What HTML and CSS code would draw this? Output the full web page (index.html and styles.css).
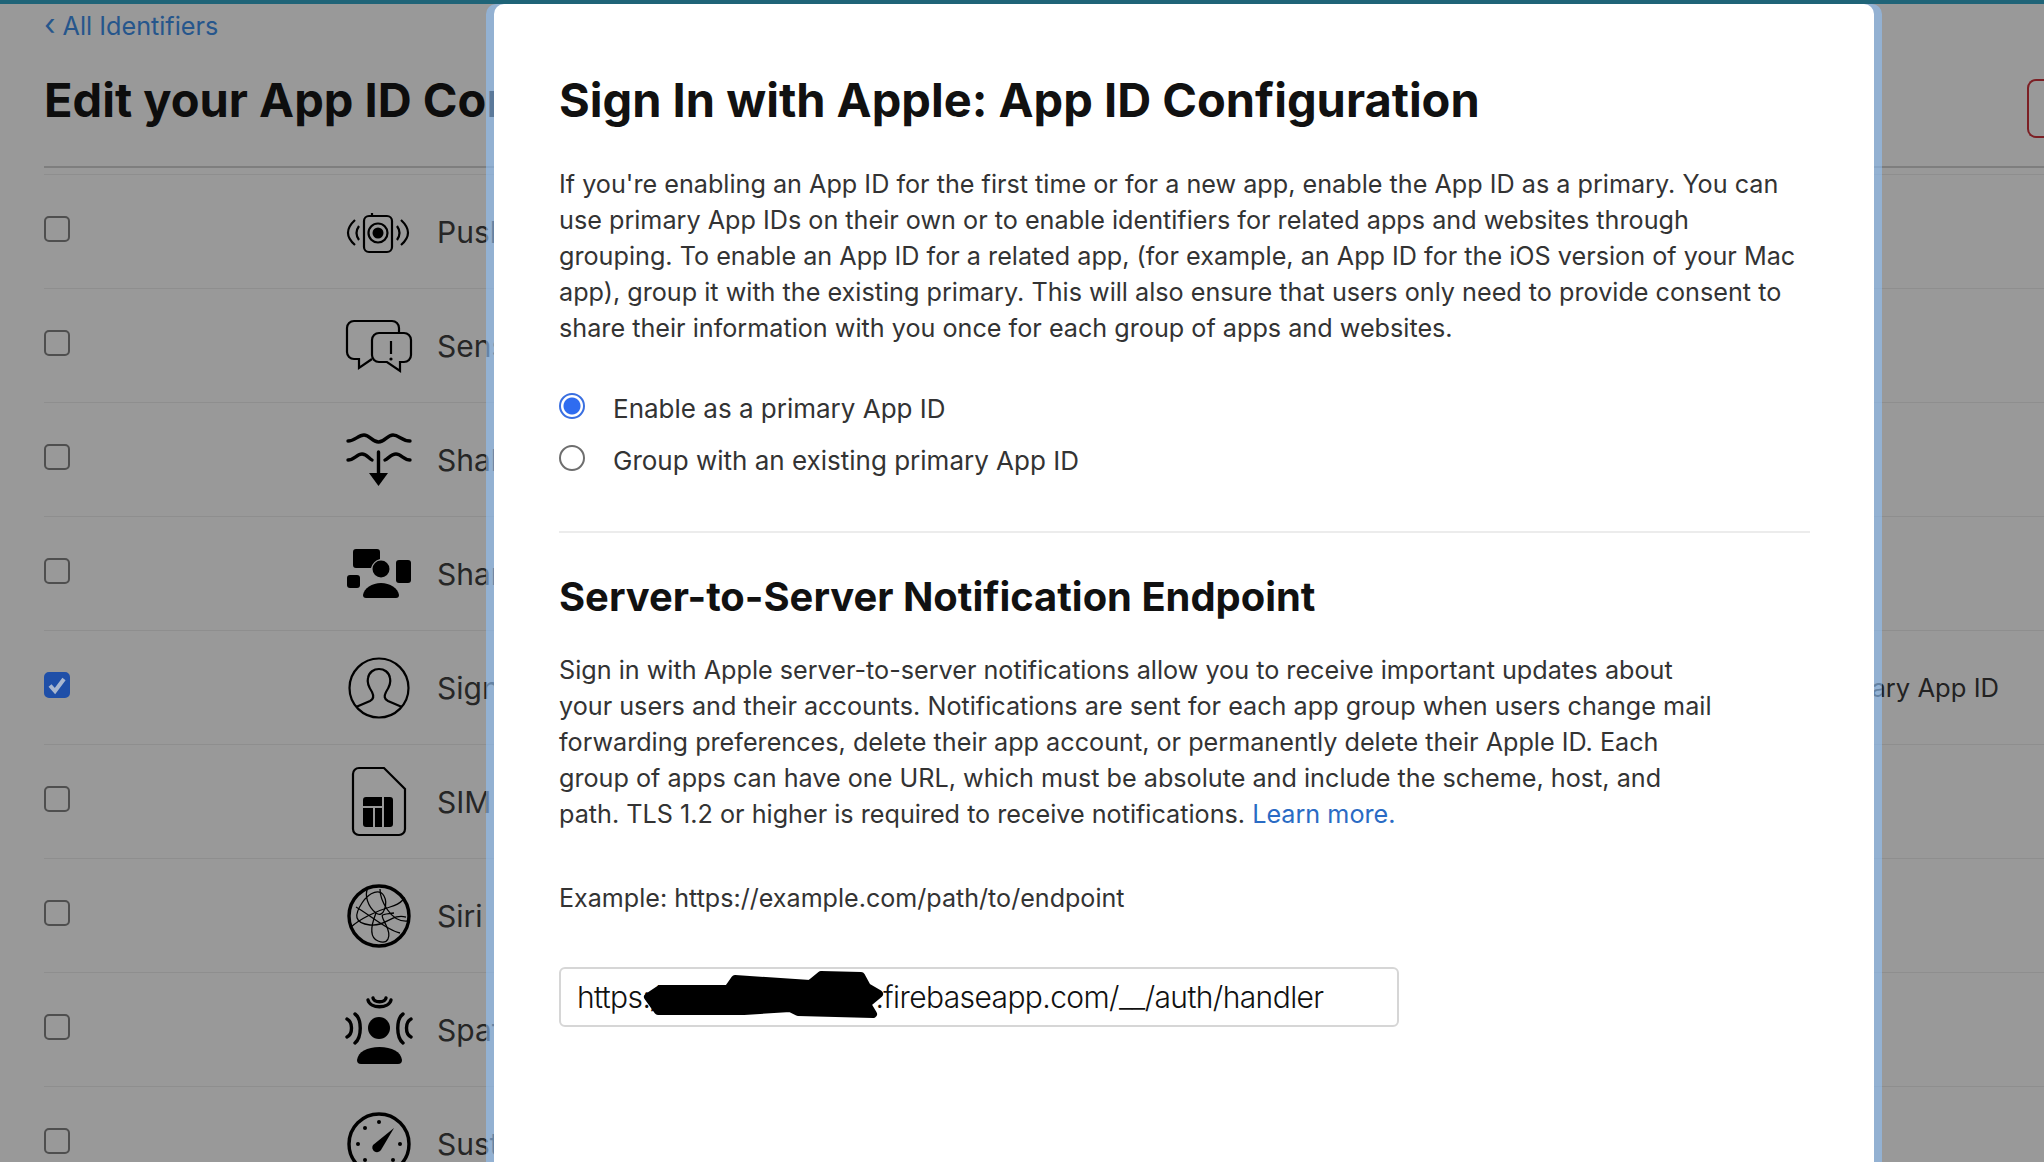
FILE: index.html
```html
<!DOCTYPE html>
<html lang="en">
<head>
<meta charset="utf-8">
<title>Edit your App ID Configuration</title>
<link rel="stylesheet" href="styles.css">
</head>
<body>
<div class="topbar"></div>
<main class="page">
  <a class="back"><span class="chev">‹</span> All Identifiers</a>
  <header class="head">
    <h1 class="page-title">Edit your App ID Configuration</h1>
    <span class="save"></span>
  </header>
  <div class="rule"></div>
  <div class="rows">
    <div class="row">
      <span class="check"></span>
      <svg class="ico" viewBox="0 0 66 66"><g class="ln2"><rect x="18" y="17" width="28" height="36" rx="5"/><path d="M26 17v-3"/><circle cx="32" cy="34" r="9.500"/><path d="M9 21Q-5 34 9 46M13 27Q8 34 13 41M55 21Q69 34 55 46M51 27Q56 34 51 41"/></g><circle cx="32" cy="34" r="5.500"/></svg>
      <span class="name">Push Notifications</span>
    </div>
    <div class="row">
      <span class="check"></span>
      <svg class="ico" viewBox="0 0 66 66"><g class="ln2"><path d="M53 20V15a7 7 0 0 0-7-7H8a7 7 0 0 0-7 7V39a7 7 0 0 0 7 7H13V55L26 46"/><path d="M33 20H58a7 7 0 0 1 7 7V42a7 7 0 0 1-7 7H54V58L41 49H33a7 7 0 0 1-7-7V27a7 7 0 0 1 7-7Z"/><path d="M45 28V41"/></g><circle cx="45" cy="46" r="1.600"/></svg>
      <span class="name">Sensitive Content Analysis</span>
    </div>
    <div class="row">
      <span class="check"></span>
      <svg class="ico" viewBox="0 0 66 66"><g class="ln3"><path d="M2 14C9 14 12 8 18 8S26 15 32.500 15 41 8 47 8 56 14 64 14"/><path d="M2 33C8 33 11 27 16 27S23 32 26 33M39 33C42 32 45 27 50 27S58 33 64 33"/><path d="M32.500 25V47"/></g><path d="M23 46H42L32.500 59Z"/></svg>
      <span class="name">Shallow Depth and Pressure</span>
    </div>
    <div class="row">
      <span class="check"></span>
      <svg class="ico" viewBox="0 0 66 66"><path d="M10 8H31a3 3 0 0 1 3 3V18A13 13 0 0 0 25 27H10a3 3 0 0 1-3-3V11a3 3 0 0 1 3-3Z"/><rect x="50" y="19" width="15" height="23" rx="3"/><rect x="1" y="34" width="13" height="13" rx="3"/><circle cx="35" cy="28" r="8.500"/><path d="M17 54C18 47 26 42 35 42S52 47 53 54Q53 57 50 57H20Q17 57 17 54Z"/></svg>
      <span class="name">Shared with You</span>
    </div>
    <div class="row">
      <span class="check is-on"><svg viewBox="0 0 26 26"><path class="tick" d="M6 13.500 11 19 20 7"/></svg></span>
      <svg class="ico" viewBox="0 0 66 66"><g class="ln2"><circle cx="33" cy="33" r="29.500"/><path d="M10 52L24 46C28 44 28 41 26 37C22 31 21 27 22 23C23 17 28 14 33 14C38 14 43 17 44 23C45 27 44 31 40 37C38 41 38 44 42 46L56 52"/></g></svg>
      <span class="name">Sign In with Apple</span>
      <span class="config">Enable as a primary App ID</span>
    </div>
    <div class="row">
      <span class="check"></span>
      <svg class="ico" viewBox="0 0 66 66"><path class="ln2" d="M13-1H38L59 20V60a6 6 0 0 1-6 6H13a6 6 0 0 1-6-6V5a6 6 0 0 1 6-6Z"/><path d="M20 28H36V37H17V31a3 3 0 0 1 3-3ZM38 28H44a3 3 0 0 1 3 3V55a3 3 0 0 1-3 3H38ZM17 39H27V58H20a3 3 0 0 1-3-3ZM29 39H36V58H29Z"/></svg>
      <span class="name">SIM Access</span>
    </div>
    <div class="row">
      <span class="check"></span>
      <svg class="ico" viewBox="0 0 66 66"><circle class="ln3" cx="33" cy="33" r="30"/><g class="ln1"><path d="M22 5C18 12 22 24 30 30S42 20 38 13 24 8 16 20 8 40 24 42 46 30 60 34"/><path d="M5 44C14 36 30 28 44 24S58 14 58 14"/><path d="M30 30C26 40 22 54 32 58S46 54 40 42 34 32 48 30"/><path d="M10 24C24 32 42 48 54 50"/><path d="M34 6C34 16 44 40 62 38"/></g></svg>
      <span class="name">Siri</span>
    </div>
    <div class="row">
      <span class="check"></span>
      <svg class="ico" viewBox="0 0 66 66"><circle cx="33" cy="31" r="11"/><path d="M11 63C12 55 21 50 33.500 50S55 55 56 63Q56 67 52 67H15Q11 67 11 63Z"/><g class="ln3"><path d="M22 3C24 12 43 12 45 3M27 1C28 6 39 6 40 1"/><path d="M9 17C16 22 16 40 9 46M1 22C7 25 7 37 1 40"/><path d="M57 17C50 22 50 40 57 46M65 22C59 25 59 37 65 40"/></g></svg>
      <span class="name">Spatial Audio Profile</span>
    </div>
    <div class="row">
      <span class="check"></span>
      <svg class="ico" viewBox="0 0 66 66"><circle class="ln3" cx="33" cy="33" r="30"/><path d="M48 17 35 39a4.500 4.500 0 0 1-8-5Z"/><circle cx="33" cy="11" r="2"/><circle cx="19" cy="17" r="2"/><circle cx="12" cy="33" r="2"/><circle cx="54" cy="33" r="2"/><circle cx="47" cy="49" r="2"/><circle cx="19" cy="49" r="2"/></svg>
      <span class="name">Sustained Execution</span>
    </div>
  </div>
</main>

<div class="scrim">
  <section class="modal">
    <h2 class="modal-title">Sign In with Apple: App ID Configuration</h2>
    <p class="copy intro">If you're enabling an App ID for the first time or for a new app, enable the App ID as a primary. You can use primary App IDs on their own or to enable identifiers for related apps and websites through grouping. To enable an App ID for a related app, (for example, an App ID for the iOS version of your Mac app), group it with the existing primary. This will also ensure that users only need to provide consent to share their information with you once for each group of apps and websites.</p>
    <div class="choices">
      <div class="choice"><span class="radio is-on"></span><span>Enable as a primary App ID</span></div>
      <div class="choice"><span class="radio"></span><span>Group with an existing primary App ID</span></div>
    </div>
    <div class="divider"></div>
    <h3 class="section-title">Server-to-Server Notification Endpoint</h3>
    <p class="copy notes">Sign in with Apple server-to-server notifications allow you to receive important updates about your users and their accounts. Notifications are sent for each app group when users change mail forwarding preferences, delete their app account, or permanently delete their Apple ID. Each group of apps can have one URL, which must be absolute and include the scheme, host, and path. TLS 1.2 or higher is required to receive notifications. <a class="link">Learn more.</a></p>
    <p class="example">Example: https://example.com/path/to/endpoint</p>
    <div class="field">
      <span>https</span><span class="hidden-part">://</span><span>.firebaseapp.com/__/auth/handler</span>
      <svg class="scribble" viewBox="0 0 245 52"><path d="M8 28 20 20H88L95 10 170 15 181 6 221 7 227 18 239 25 227 35 233 45 158 43 150 39 104 42 18 42Z"/></svg>
    </div>
  </section>
</div>
</body>
</html>
```
FILE: styles.css
```css
* { box-sizing: border-box; }
html, body { height: 100%; }
body {
  margin: 0;
  height: 1162px;
  overflow: hidden;
  position: relative;
  background: #999;
  color: #222;
  font-family: Inter, "Liberation Sans", sans-serif;
}
.topbar { height: 4px; background: #1f6478; }

.page { padding-left: 44px; }
.back { display: block; height: 40px; line-height: 40px; font-size: 25.200px; color: #26568c; }
.chev { font-size: 30px; }
.head { display: flex; align-items: center; justify-content: space-between; height: 122px; padding-bottom: 10px; }
.page-title { margin: 0; font-size: 47px; font-weight: 700; line-height: 60px; color: #0d0d0d; white-space: nowrap; }
.save { width: 17px; height: 59px; margin-top: 17px; flex: none; border: 2px solid #7c1f24; border-right: 0; border-radius: 9px 0 0 9px; }
.rule { height: 2px; background: #7e7e7e; margin-bottom: 6px; }
.rows { border-top: 1px solid #8e8e8e; }
.row {
  display: grid;
  grid-template-columns: 302px 91px 1fr auto;
  align-items: center;
  height: 114px;
  padding-right: 45px;
  border-bottom: 1px solid #8e8e8e;
}
.check { width: 26px; height: 26px; margin-top: -6px; border: 2px solid #4f4f4f; border-radius: 5px; }
.check.is-on { background: #1f4fa8; border-color: #1f4fa8; }
.check svg { display: block; width: 26px; height: 26px; margin: -2px; }
.tick { fill: none; stroke: #a9b7cf; stroke-width: 4; }
.ico { width: 66px; height: 66px; overflow: visible; fill: #000; }
.ln1, .ln2, .ln3 { fill: none; stroke: #000; }
.ln1 { stroke-width: 1.300; }
.ln2 { stroke-width: 2.200; }
.ln3 { stroke-width: 3.400; stroke-linecap: round; }
.name { font-size: 30px; color: #262626; white-space: nowrap; }
.config { font-size: 25.600px; color: #222; white-space: nowrap; }

.scrim { position: absolute; top: 4px; left: 486px; width: 1396px; height: 1158px; background: rgba(143, 193, 248, .6); padding: 0 8px; border-radius: 10px 10px 0 0; }
.modal { height: 100%; background: #fff; border-radius: 10px 10px 0 0; padding: 68px 64px 0 65px; }
.modal-title { margin: 0; font-size: 47px; line-height: 56px; font-weight: 700; color: #111; }
.copy { margin: 0; font-size: 25.200px; line-height: 36px; color: #333; }
.intro { margin-top: 38px; max-width: 1240px; }
.choices { margin-top: 36px; font-size: 26px; color: #333; }
.choice { display: flex; align-items: center; gap: 28px; height: 52px; }
.radio { width: 26px; height: 26px; margin-top: -5px; border-radius: 50%; border: 2px solid #6e6e6e; background: #fff; flex: none; }
.radio.is-on { border-color: #3a6fe0; background: radial-gradient(circle, #2f6cf0 0 8px, #fff 9px); }
.divider { height: 2px; background: #ececec; margin-top: 45px; }
.section-title { margin: 39px 0 0; font-size: 39.900px; line-height: 50px; font-weight: 700; color: #111; }
.notes { margin-top: 30px; max-width: 1160px; }
.link { color: #2a6bc4; }
.example { margin: 48px 0 0; font-size: 25.100px; line-height: 36px; color: #333; }
.field {
  position: relative;
  display: flex;
  align-items: center;
  width: 840px;
  height: 60px;
  margin-top: 51px;
  padding-left: 16px;
  border: 2px solid #d6d6d6;
  border-radius: 6px;
  font-size: 30px;
  font-weight: 300;
  letter-spacing: -.6px;
  color: #111;
  white-space: nowrap;
}
.hidden-part { width: 233px; }
.scribble { position: absolute; left: 79px; top: 0; width: 245px; height: 52px; fill: #000; stroke: #000; stroke-width: 8; stroke-linejoin: round; }
```
